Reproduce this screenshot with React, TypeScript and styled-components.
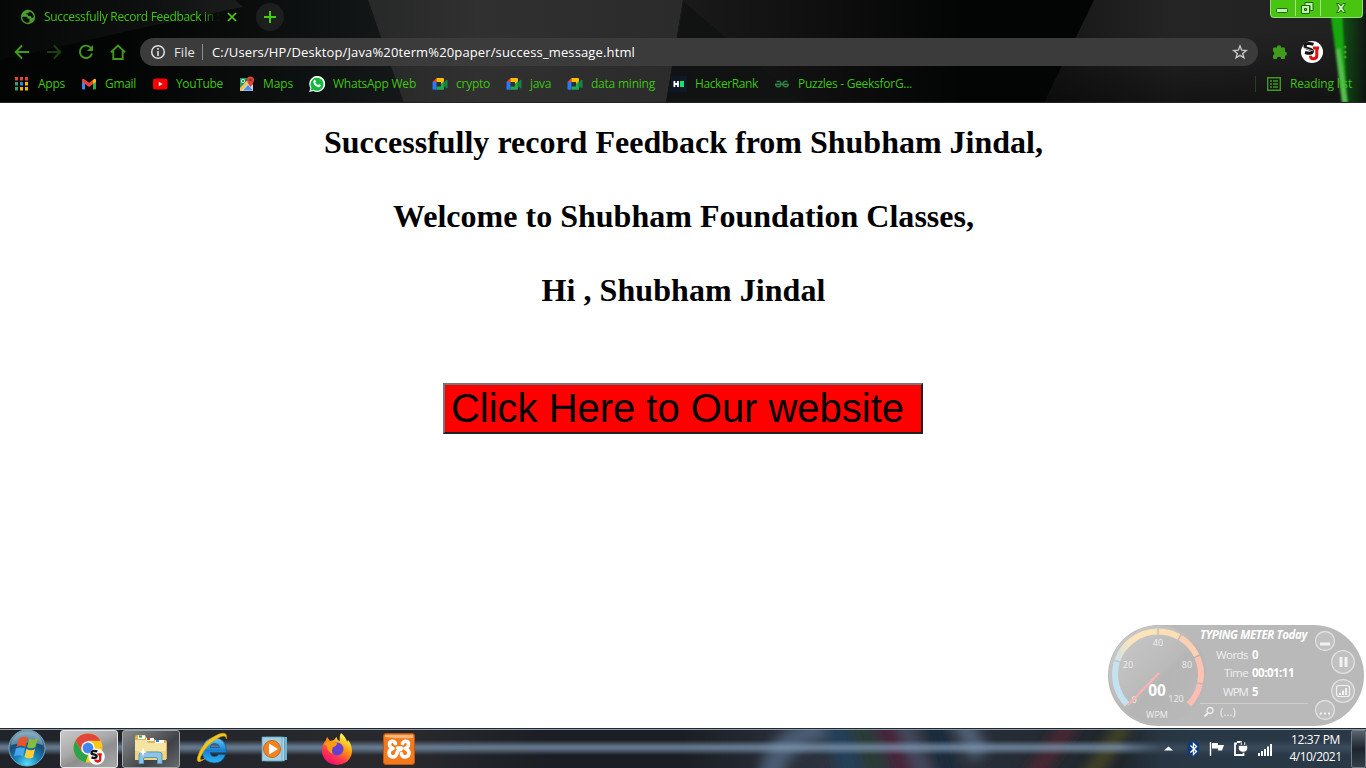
import React, { useLayoutEffect, useRef } from "react";
import styled, { createGlobalStyle } from "styled-components";

const Global = createGlobalStyle`
  * { box-sizing: border-box; }
  html, body { margin: 0; padding: 0; overflow: hidden; background: #fff; }
  svg { display: block; flex: none; }
`;

const ui = `"Open Sans", "Noto Sans", sans-serif`;

/* Text tracked so that it fills exactly the given width */
const Tracked = styled.span<{ $w: number }>`
  display: block;
  flex: none;
  width: ${(p) => p.$w}px;
  white-space: pre;
`;

function Fit({ w, children }: { w: number; children: string }) {
  const inner = useRef<HTMLSpanElement>(null);
  useLayoutEffect(() => {
    const el = inner.current;
    if (!el) return;
    el.style.letterSpacing = "0px";
    const natural = el.getBoundingClientRect().width;
    el.style.letterSpacing = `${(w - natural) / children.length}px`;
  }, [w, children]);
  return (
    <Tracked $w={w}>
      <span ref={inner}>{children}</span>
    </Tracked>
  );
}

const Screen = styled.div`
  position: relative;
  display: flex;
  flex-direction: column;
  width: 1366px;
  height: 768px;
  overflow: hidden;
  background: #fff;
  font-family: ${ui};
`;

/* ---------- browser chrome ---------- */

const Chrome = styled.header`
  position: relative;
  display: flex;
  flex-direction: column;
  height: 103px;
  flex: none;
  background: #050606;
  color: #3ec412;
  font-size: 12px;
  line-height: 16px;
`;
const ThemeArt = styled.svg`
  position: absolute;
  inset: 0;
`;
const TabStrip = styled.div`
  position: relative;
  display: flex;
  align-items: flex-start;
  height: 34px;
  padding-left: 20px;
`;
const Tab = styled.div`
  display: flex;
  align-items: center;
  gap: 4px;
  width: 236px;
  height: 34px;
`;
const TabTitle = styled.div`
  width: 176px;
  margin-left: 4px;
  overflow: hidden;
  mask-image: linear-gradient(90deg, #000 158px, transparent 176px);
`;
const NewTab = styled.div`
  display: grid;
  place-items: center;
  width: 28px;
  height: 28px;
  margin-top: 3px;
  border-radius: 50%;
  background: #1d1f1f;
`;
const WindowControls = styled.div`
  display: flex;
  width: 93px;
  height: 18px;
  margin-left: 986px;
  border: 1px solid #8fdc72;
  border-top: 0;
  border-radius: 0 0 4px 4px;
  background: #48c411;
  overflow: hidden;
`;
const Control = styled.div<{ $w: number }>`
  display: grid;
  place-items: center;
  width: ${(p) => p.$w}px;
  height: 16px;
  padding-right: 2px;
  & + & { border-left: 1px solid #a0e388; }
`;
const Toolbar = styled.div`
  position: relative;
  display: flex;
  align-items: center;
  height: 36px;
  padding-left: 14px;
`;
const NavButtons = styled.div`
  display: flex;
  gap: 16px;
  width: 126px;
`;
const Omnibox = styled.div`
  display: flex;
  align-items: center;
  width: 1118px;
  height: 28px;
  padding: 0 10px;
  border-radius: 14px;
  background: #3b3b3b;
  color: #fff;
  font-size: 13px;
`;
const Scheme = styled.div`
  display: flex;
  margin-left: 8px;
  color: #e4e4e4;
`;
const OmniRule = styled.div`
  width: 1px;
  height: 16px;
  margin: 0 9px 0 7px;
  background: #8b8b8b;
`;
const StarSlot = styled.div`
  margin-left: auto;
`;
const ToolbarActions = styled.div`
  display: flex;
  align-items: center;
  gap: 12px;
  margin-left: 14px;
`;
const Bookmarks = styled.div`
  position: relative;
  display: flex;
  align-items: center;
  gap: 16px;
  height: 28px;
  padding-left: 14px;
`;
const Bookmark = styled.div`
  display: flex;
  align-items: center;
  gap: 8px;
`;
const ReadingList = styled.div`
  display: flex;
  align-items: center;
  gap: 8px;
  height: 16px;
  margin-left: 327px;
  padding-left: 10px;
  border-left: 1px solid #254016;
`;

/* ---------- page ---------- */

const Page = styled.main`
  display: flex;
  flex-direction: column;
  align-items: center;
  height: 625px;
  flex: none;
  padding-top: 21px;
  background: #fff;
`;
const Heading = styled.h1`
  display: flex;
  justify-content: center;
  margin: 0 0 37px;
  padding-left: 1px;
  color: #000;
  font: bold 32px/37px "Liberation Serif", serif;
`;
const LinkButton = styled.button`
  display: flex;
  align-items: center;
  width: 480px;
  height: 51px;
  margin-top: 37px;
  padding: 0 0 1px 6px;
  border: 2px solid;
  border-color: #767676 #222 #222 #767676;
  background: #f00;
  color: #000;
  font: 40px/46px "Liberation Sans", sans-serif;
  text-align: left;
`;

/* ---------- typing meter ---------- */

const Meter = styled.aside`
  position: absolute;
  left: 1108px;
  top: 625px;
  display: flex;
  width: 256px;
  height: 101px;
  border-radius: 51px;
  background: #b9b9b9;
  color: #f0f0f0;
  font-size: 11px;
  line-height: 14px;
  overflow: hidden;
`;
const MeterBody = styled.div`
  display: flex;
  flex-direction: column;
  width: 105px;
  margin-left: -9px;
  padding-top: 3px;
`;
const MeterTitle = styled.div`
  margin-bottom: 1px;
  color: #fff;
  font-size: 11.5px;
  font-style: italic;
  font-weight: 700;
`;
const Stat = styled.div`
  display: flex;
  justify-content: flex-end;
  gap: 4px;
  width: 95px;
  height: 14px;
  margin-top: 4.5px;
  font-size: 11.5px;
  b { width: 43px; color: #fff; }
`;
const MeterFoot = styled.div`
  display: flex;
  gap: 5px;
  align-items: center;
  height: 17px;
  width: 108px;
  margin-top: 4px;
  padding-left: 3px;
  border-top: 1px solid #cdcdcd;
`;
const MeterButtons = styled.svg`
  margin-left: 2px;
`;

/* ---------- taskbar ---------- */

const Taskbar = styled.footer`
  position: relative;
  display: flex;
  align-items: center;
  height: 40px;
  flex: none;
  padding-left: 7px;
  background: #20242b;
  color: #fff;
`;
const TaskArt = styled.svg`
  position: absolute;
  inset: 0;
`;
const Tasks = styled.div`
  position: relative;
  display: flex;
  gap: 4px;
  margin-left: 13px;
`;
const Task = styled.div<{ $state?: "active" | "open" }>`
  display: grid;
  place-items: center;
  width: 58px;
  height: 38px;
  margin-top: 1px;
  border-radius: 3px;
  border: 1px solid ${(p) => (p.$state === "active" ? "#e3e4e5" : p.$state === "open" ? "#a4a8ab" : "transparent")};
  background: ${(p) =>
    p.$state === "active"
      ? "linear-gradient(155deg, #c9c9c9 0%, #aaa 42%, #8e8e8e 60%, #a9a9a9 100%)"
      : p.$state === "open"
      ? "linear-gradient(140deg, #8a8c8e 0%, #55585b 45%, #3e4246 62%, #666a6d 100%)"
      : "transparent"};
`;
const Start = styled.div`
  position: relative;
`;
const Tray = styled.div`
  position: relative;
  display: flex;
  align-items: center;
  margin-left: auto;
`;
const Clock = styled.div`
  display: flex;
  flex-direction: column;
  align-items: center;
  width: 72px;
  margin: 0 0 0 5px;
  padding-left: 1px;
  font-size: 12px;
  line-height: 17px;
`;
const ShowDesktop = styled.div`
  width: 15px;
  height: 38px;
  margin-top: 1px;
  border: 1px solid #717b86;
  border-radius: 2px;
  background: linear-gradient(#59646f, #1d242d 50%, #333e49);
`;

const G = "#3f9a1d";

function ThemeBackdrop() {
  return (
    <ThemeArt width="1366" height="103" viewBox="0 0 1366 103">
      <defs>
        <linearGradient id="mid"><stop stopColor="#272828" /><stop offset=".35" stopColor="#303030" /><stop offset="1" stopColor="#2b2b2b" /></linearGradient>
        <linearGradient id="fade"><stop stopColor="#1b1b1b" /><stop offset=".4" stopColor="#121212" /><stop offset="1" stopColor="#030404" /></linearGradient>
        <linearGradient id="left"><stop stopColor="#060808" /><stop offset=".6" stopColor="#0e1010" /><stop offset="1" stopColor="#1c1e1e" /></linearGradient>
        <linearGradient id="gap"><stop stopColor="#030404" /><stop offset=".65" stopColor="#0e1111" /><stop offset="1" stopColor="#151818" /></linearGradient>
        <linearGradient id="right"><stop stopColor="#151515" /><stop offset=".4" stopColor="#252525" /><stop offset="1" stopColor="#202020" /></linearGradient>
        <linearGradient id="glow"><stop stopColor="#128c12" /><stop offset=".5" stopColor="#0b4a10" /><stop offset="1" stopColor="#0d120d" /></linearGradient>
        <linearGradient id="shade" x1="0" x2="0" y1="0" y2="1"><stop offset=".3" stopColor="#000" stopOpacity="0" /><stop offset="1" stopColor="#000" stopOpacity=".45" /></linearGradient>
        <filter id="soft"><feGaussianBlur stdDeviation="1.3" /></filter>
      </defs>
      <rect width="1366" height="103" fill="#030404" />
      <path d="M120 0H368L405 103H120Z" fill="url(#gap)" />
      <path d="M0 0H235L243 7 155 25 0 60Z" fill="url(#left)" />
      <path d="M368 0H683L666 103H404Z" fill="url(#mid)" />
      <path d="M683 0H960V103H666Z" fill="url(#fade)" />
      <path d="M684 2L803 103H666Z" fill="#111212" />
      <path d="M1094 0H1366V103H1044Z" fill="url(#right)" />
      <path d="M1094 0H1366V103H1044Z" fill="url(#shade)" />
      <path d="M1332 14H1366V103H1346Z" fill="url(#glow)" opacity=".75" />
      <g filter="url(#soft)">
        <path d="M1330 10L1342 10 1347 103 1342 103Z" fill="#12a811" />
        <path d="M1336 50L1340 48 1348 103 1342 103Z" fill="#57bd51" />
      </g>
      <rect y="102" width="1366" height="1" fill="#242424" />
    </ThemeArt>
  );
}

const Globe = () => (
  <svg width="16" height="16" viewBox="0 0 16 16">
    <circle cx="8" cy="8" r="7.2" fill="#49a02b" />
    <path d="M2.300 7.800h4q1.700.3 1.500 2H9.500v3.500Q7.500 14.200 5.500 13.200 2 11.500 2.300 7.800ZM9.500 2.500Q13.500 4 13.800 8q-1 1.500-2.300.7L10.500 7H8V5.400H6.500V4Q9.500 4 9.500 2.500Z" fill="#0a0d0a" />
  </svg>
);
const Apps = () => (
  <svg width="16" height="16" viewBox="0 0 16 16">
    {["#e94335", "#e94335", "#e94335", "#34a064", "#2b83ea", "#f5b400", "#34a064", "#f5b400", "#f5b400"].map((c, i) => (
      <rect key={i} x={1 + (i % 3) * 5} y={1 + Math.floor(i / 3) * 5} width="3" height="3.500" fill={c} />
    ))}
  </svg>
);
const Gmail = () => (
  <svg width="16" height="16" viewBox="0 0 16 16">
    <path d="M1 4v8.500q0 1 1 1h2V6Z" fill="#4285f4" />
    <path d="M15 4v8.500q0 1-1 1h-2V6Z" fill="#34a853" />
    <path d="M12 4l1-1q2-.6 2 1.300v1.500L12 8Z" fill="#fbbc04" />
    <path d="M1 5.800V4.300Q1 2.400 3 3L8 6.800 12 3.800V8L8 11 4 8Z" fill="#ea4335" />
  </svg>
);
const YouTube = () => (
  <svg width="16" height="16" viewBox="0 0 16 16">
    <rect x="1" y="2.500" width="14.500" height="11" rx="2.500" fill="#f00" />
    <path d="M6.800 5.800L10.500 8 6.800 10.200Z" fill="#fff" />
  </svg>
);
const Maps = () => (
  <svg width="16" height="16" viewBox="0 0 16 16">
    <path d="M1 2h8L1 12Z" fill="#23995c" />
    <path d="M1 12L9 3l5 6v6H1Z" fill="#d8d8d8" />
    <path d="M4 14.500L9 9l5 5.500Z" fill="#4d8df6" />
    <path d="M1 12.500L10 3.500l1 2L2 15H1Z" fill="#f8c52f" />
    <circle cx="4" cy="5" r="1.700" fill="none" stroke="#c8e8d5" />
    <path d="M11.500 11Q8 6.500 8 4a3.500 3.500 0 017 0q0 2.500-3.500 7Z" fill="#db4437" />
    <circle cx="11.500" cy="4" r="1.200" fill="#7b231c" />
  </svg>
);
const WhatsApp = () => (
  <svg width="16" height="16" viewBox="0 0 16 16">
    <path d="M.2 16L1.300 12A8 8 0 114.200 14.900Z" fill="#f2fff2" />
    <path d="M1.700 14.500l.8-2.800a6.500 6.500 0 112 2Z" fill="#15b83e" />
    <path d="M5.300 4c.6-.4 1-.2 1.200.4l.5 1.200-.7 1c.6 1.200 1.500 2 2.800 2.600l1-1 1.800.9c.1 2-2 2.400-3.500 1.800C6.200 10 4.500 8 4.400 6.200Q4.300 4.800 5.300 4Z" fill="#fff" />
  </svg>
);
const Meet = () => (
  <svg width="16" height="16" viewBox="0 0 16 16">
    <path d="M.5 6L4.500 2v4Z" fill="#ea4335" />
    <path d="M4.500 2H11q1 0 1 1v4L9 8V6H4.500Z" fill="#fbbc04" />
    <path d="M.5 6h4v7.800H1.500q-1 0-1-1Z" fill="#2879f2" />
    <path d="M4.500 10.500H9V8l3-3v7.800q0 1-1 1H4.500Z" fill="#20a853" />
    <path d="M11 7.800L14.200 4q1.300-.7 1.300.5v7q0 1.200-1.300.5L11 9Z" fill="#168542" />
  </svg>
);
const Hacker = () => (
  <svg width="16" height="16" viewBox="0 0 16 16">
    <rect width="16" height="16" fill="#101827" />
    <path d="M3.400 5v6M7 5v6M3.400 8H7" stroke="#fff" strokeWidth="1.800" />
    <rect x="9" y="5" width="4" height="6" fill="#12e56c" />
  </svg>
);
const Geeks = () => (
  <svg width="16" height="16" viewBox="0 0 16 16" fill="none" stroke="#2c8044" strokeWidth="1.400">
    <path d="M2.500 5.700Q7 4.200 7 8q0 2.700-2.700 2.700T1.600 8.300H14.500M13.500 5.700Q9 4.200 9 8q0 2.700 2.700 2.700t2.700-2.400" />
  </svg>
);

const bookmarks: [() => React.JSX.Element, string, number][] = [
  [Apps, "Apps", 27],
  [Gmail, "Gmail", 31],
  [YouTube, "YouTube", 47],
  [Maps, "Maps", 30],
  [WhatsApp, "WhatsApp Web", 83],
  [Meet, "crypto", 34],
  [Meet, "java", 21],
  [Meet, "data mining", 64],
  [Hacker, "HackerRank", 63],
  [Geeks, "Puzzles - GeeksforG...", 114],
];

const Avatar = () => (
  <svg width="24" height="22" viewBox="-1 0 24 22">
    <circle cx="11" cy="11" r="11" fill="#fff" />
    <path d="M12.500 3.200Q4 1 4 5.500C4 8.500 11.500 7 11.500 10.500Q11 13.500 4 11.500" fill="none" stroke="#111" strokeWidth="3" />
    <path d="M12 7h6M15.800 7v7.500q0 3.300-3.300 3.300-3 0-3-3" fill="none" stroke="#e01212" strokeWidth="3" />
    <path d="M3 7l9 3" stroke="#fff" strokeWidth=".7" />
  </svg>
);

function BrowserChrome() {
  return (
    <Chrome>
      <ThemeBackdrop />
      <TabStrip>
        <Tab>
          <Globe />
          <TabTitle><Fit w={179}>Successfully Record Feedback in S</Fit></TabTitle>
          <svg width="16" height="16" viewBox="0 0 16 16"><path d="M4 4l8 8M12 4l-8 8" stroke="#4dcc22" strokeWidth="1.700" /></svg>
        </Tab>
        <NewTab>
          <svg width="14" height="14" viewBox="0 0 14 14"><path d="M7 1v12M1 7h12" stroke="#3fd010" strokeWidth="2" /></svg>
        </NewTab>
        <WindowControls>
          <Control $w={24}>
            <svg width="14" height="14" viewBox="0 0 14 14"><rect x="1.500" y="7.500" width="11" height="4" rx="1" fill="#c3efb4" stroke="#1b6a08" /></svg>
          </Control>
          <Control $w={25}>
            <svg width="14" height="14" viewBox="0 0 14 14"><path d="M5 1.500h8v8H10V4.500H5Z" fill="#c3efb4" stroke="#1b6a08" /><path fillRule="evenodd" d="M1.500 4.500h8v8h-8ZM4.500 7.500v2h2v-2Z" fill="#c3efb4" stroke="#1b6a08" /></svg>
          </Control>
          <Control $w={42}>
            <svg width="14" height="14" viewBox="0 0 14 14"><path d="M2.500 2.500H5L7 5l2-2.500h2.500L8.700 7l2.800 4.500H9L7 9l-2 2.500H2.500L5.300 7Z" fill="#d2f4c7" stroke="#1b6a08" /></svg>
          </Control>
        </WindowControls>
      </TabStrip>
      <Toolbar>
        <NavButtons>
          <svg width="16" height="16" viewBox="0 0 16 16"><path d="M15 8H2M8 1.500L1.700 8 8 14.500" fill="none" stroke={G} strokeWidth="1.900" /></svg>
          <svg width="16" height="16" viewBox="0 0 16 16"><path d="M1 8h13M8 1.500L14.300 8 8 14.500" fill="none" stroke="#1c400f" strokeWidth="1.900" /></svg>
          <svg width="16" height="16" viewBox="0 0 16 16"><path d="M13.300 4.500A6.200 6.200 0 1014 9.500" fill="none" stroke={G} strokeWidth="1.900" /><path d="M15 1v6H9Z" fill={G} /></svg>
          <svg width="16" height="16" viewBox="0 0 16 16"><path d="M1 8.300L8 1.500 15 8.300M3.300 7v8h9.400V7" fill="none" stroke={G} strokeWidth="1.900" /></svg>
        </NavButtons>
        <Omnibox>
          <svg width="16" height="16" viewBox="0 0 16 16"><circle cx="8" cy="8" r="6.300" fill="none" stroke="#e0e0e0" strokeWidth="1.500" /><path d="M8 7v5M8 4v1.700" stroke="#e0e0e0" strokeWidth="1.600" /></svg>
          <Scheme><Fit w={21}>File</Fit></Scheme>
          <OmniRule />
          <Fit w={423}>C:/Users/HP/Desktop/Java%20term%20paper/success_message.html</Fit>
          <StarSlot>
            <svg width="16" height="16" viewBox="0 0 16 16"><path d="M8 2l1.700 4.200 4.500.3-3.500 2.900 1.200 4.400L8 11.300l-3.900 2.500 1.200-4.400-3.500-2.900 4.500-.3Z" fill="none" stroke="#c8c8c8" strokeWidth="1.400" /></svg>
          </StarSlot>
        </Omnibox>
        <ToolbarActions>
          <svg width="16" height="16" viewBox="0 0 16 16"><path d="M1 4.500q0-1 1-1h2.800a2.200 2.200 0 014.400 0H12q1 0 1 1v3.200a2 2 0 010 4V14q0 1-1 1H9.200a2.200 2.200 0 00-4.400 0H2q-1 0-1-1v-2.500a2.200 2.200 0 000-4Z" fill={G} /></svg>
          <Avatar />
          <svg width="20" height="16" viewBox="0 0 20 16"><g fill={G}><circle cx="9" cy="3" r="1.600" /><circle cx="9" cy="8" r="1.600" /><circle cx="9" cy="13" r="1.600" /></g></svg>
        </ToolbarActions>
      </Toolbar>
      <Bookmarks>
        {bookmarks.map(([Icon, label, w]) => (
          <Bookmark key={label}><Icon /><Fit w={w}>{label}</Fit></Bookmark>
        ))}
        <ReadingList>
          <svg width="16" height="16" viewBox="0 0 16 16"><path d="M1.700 1.700h12.600v12.600H1.700Z" fill="none" stroke={G} strokeWidth="1.400" /><path d="M4 5h2M7 5h5M4 8h2M7 8h5M4 11h2M7 11h5" stroke={G} strokeWidth="1.500" /></svg>
          <Fit w={62}>Reading list</Fit>
        </ReadingList>
      </Bookmarks>
    </Chrome>
  );
}

const polar = (deg: number, r: number) => {
  const a = (deg * Math.PI) / 180;
  return `${(50 + r * Math.cos(a)).toFixed(2)} ${(49.5 + r * Math.sin(a)).toFixed(2)}`;
};
const arcs: [number, number, string][] = [
  [136, 197, "#c5e2f0"],
  [199, 269, "url(#blend)"],
  [271, 299, "#fce0b4"],
  [301, 334, "#fdd0b2"],
  [336, 371, "#ffc2b0"],
  [373, 404, "#ffbdb4"],
];

function TypingMeter() {
  return (
    <Meter>
      <svg width="101" height="101" viewBox="0 0 101 101" fontFamily="Open Sans" fontSize="9" fill="#eee" textAnchor="middle">
        <defs>
          <linearGradient id="face" x1="0" y1="0" x2="1" y2="1"><stop offset=".1" stopColor="#c8c8c8" /><stop offset=".5" stopColor="#bababa" /><stop offset=".55" stopColor="#b5b5b5" /><stop offset="1" stopColor="#b9b9b9" /></linearGradient>
          <linearGradient id="blend" x1="0" x2="1" y1="1" y2="0"><stop stopColor="#cde4e8" /><stop offset=".45" stopColor="#fae4bd" /><stop offset="1" stopColor="#fde2b5" /></linearGradient>
        </defs>
        <circle cx="50" cy="49.500" r="49" fill="url(#face)" />
        {arcs.map(([a, b, c]) => (
          <path key={a} d={`M${polar(a, 43)}A43 43 0 0 1 ${polar(b, 43)}`} fill="none" stroke={c} strokeWidth="6" />
        ))}
        <text x="50" y="21">40</text>
        <text x="20" y="43">20</text>
        <text x="79" y="43">80</text>
        <text x="68" y="77">120</text>
        <text x="26" y="78">0</text>
        <text x="49" y="92.500">WPM</text>
        <path d="M51 48L20 80" stroke="#ffb3b1" strokeWidth="2" />
        <text x="49" y="71" fill="#fff" fontSize="15.500" fontWeight="700">00</text>
      </svg>
      <MeterBody>
        <MeterTitle><Fit w={107}>TYPING METER Today</Fit></MeterTitle>
        <Stat><Fit w={32}>Words</Fit><b>0</b></Stat>
        <Stat><Fit w={24}>Time</Fit><b><Fit w={42}>00:01:11</Fit></b></Stat>
        <Stat><Fit w={25}>WPM</Fit><b>5</b></Stat>
        <MeterFoot>
          <svg width="12" height="12" viewBox="0 0 12 12"><circle cx="7" cy="4.500" r="3" fill="none" stroke="#eee" strokeWidth="1.300" /><path d="M5 7L1.500 10.500" stroke="#eee" strokeWidth="2" /></svg>
          <Fit w={16}>(...)</Fit>
        </MeterFoot>
      </MeterBody>
      <MeterButtons width="54" height="101" viewBox="199 0 54 101">
        <g fill="#c1c1c1" stroke="#e1e1e1" strokeWidth="1.300">
          <circle cx="217" cy="16" r="9.500" /><circle cx="235" cy="37" r="11.300" /><circle cx="235" cy="66" r="11.300" /><circle cx="217" cy="85" r="9.500" />
        </g>
        <path d="M212 19h10M233 32v10M238 32v10" stroke="#f2f2f2" strokeWidth="3" />
        <rect x="228.500" y="60.500" width="13" height="11" rx="2.500" fill="none" stroke="#f2f2f2" strokeWidth="1.200" />
        <path d="M232 70v-2M235 70v-4.500M238 70v-7" stroke="#f2f2f2" strokeWidth="2" />
        <path d="M212 88.500h2M216 88.500h2M220 88.500h2" stroke="#f2f2f2" strokeWidth="2" />
      </MeterButtons>
    </Meter>
  );
}

function TaskbarBackdrop() {
  return (
    <TaskArt width="1366" height="40" viewBox="0 0 1366 40">
      <defs>
        <linearGradient id="base"><stop stopColor="#202329" /><stop offset=".3" stopColor="#29292d" /><stop offset=".4" stopColor="#1b1e24" /><stop offset=".5" stopColor="#1b1e24" /><stop offset=".62" stopColor="#303743" /><stop offset=".82" stopColor="#1f252b" /><stop offset=".88" stopColor="#293744" /><stop offset="1" stopColor="#2e3b48" /></linearGradient>
        <linearGradient id="shine" x1="0" x2="0" y1="0" y2="1"><stop offset=".3" stopColor="#7390ac" stopOpacity="0" /><stop offset=".46" stopColor="#7d96b0" stopOpacity=".72" /><stop offset=".52" stopColor="#7d96b0" stopOpacity=".7" /><stop offset=".68" stopColor="#7390ac" stopOpacity="0" /></linearGradient>
        <linearGradient id="dim"><stop offset=".82" stopColor="#22303d" stopOpacity="0" /><stop offset=".85" stopColor="#293846" stopOpacity=".75" /></linearGradient>
        <filter id="haze" x="-10%" width="120%" y="-50%" height="200%"><feGaussianBlur stdDeviation="6" /></filter>
      </defs>
      <rect width="1366" height="40" fill="url(#base)" />
      <g filter="url(#haze)" fill="none" strokeWidth="16">
        <path d="M772 60Q765 10 840 -5" stroke="#4a5b72" strokeWidth="24" />
        <path d="M832 -10L855 55" stroke="#23405a" strokeWidth="22" />
        <path d="M857 -10L880 55" stroke="#2c3d35" />
        <path d="M882 -10L908 55" stroke="#4c2139" />
        <path d="M902 -10L927 55" stroke="#454861" />
        <path d="M932 -10L952 55" stroke="#14293d" />
        <path d="M960 -10L980 28" stroke="#4f5f75" strokeWidth="20" />
        <path d="M1075 -10L1028 55" stroke="#4b2730" />
        <path d="M1130 -10L1085 55" stroke="#434327" />
      </g>
      <rect width="1366" height="40" fill="url(#shine)" />
      <rect width="1366" height="40" fill="url(#dim)" />
      <rect width="1366" height="1" fill="#20272f" />
      <rect y="1" width="1366" height="1" fill="#8f9da9" />
    </TaskArt>
  );
}

const StartOrb = () => (
  <svg width="40" height="40" viewBox="0 0 40 40">
    <defs>
      <radialGradient id="orb" cx=".5" cy=".95" r=".9"><stop stopColor="#57e4ff" /><stop offset=".35" stopColor="#1b86be" /><stop offset=".7" stopColor="#164a76" /><stop offset="1" stopColor="#7198b1" /></radialGradient>
    </defs>
    <circle cx="20" cy="20" r="18" fill="url(#orb)" stroke="#79a7bd" />
    <path d="M4 17Q6 4 20 4t16 13Q22 12 4 17Z" fill="#bcd6df" opacity=".4" />
    <path d="M12 10.500q4.500-3 9-.5L18.500 19q-4.500-2.500-9 0Z" fill="#e8552b" />
    <path d="M22.500 10.500q4 2.500 8.500-.5L28.500 19q-4.500 2.500-8.500 0Z" fill="#86bd3b" />
    <path d="M9 20.500q4.500-2 9 0l-2 8q-4.500-2.500-9 0Z" fill="#49a8ed" />
    <path d="M19.500 21q4.500 2.500 8.500 0l-2 8.500q-4.500 2-8.500-.5Z" fill="#fdce36" />
  </svg>
);
const ChromeLogo = () => (
  <svg width="32" height="32" viewBox="0 0 32 32">
    <circle cx="15" cy="15" r="14.500" fill="#fbc918" />
    <path d="M2.440 7.750A14.500 14.500 0 0127.560 7.750H15L8.700 18.600Z" fill="#e2453a" />
    <path d="M2.440 7.750L8.700 18.600Q12 22 15 22L12.500 29.300A14.500 14.500 0 012.440 7.750Z" fill="#2ba24c" />
    <circle cx="15" cy="15" r="6.800" fill="#fff" /><circle cx="15" cy="15" r="5.400" fill="#4486ef" />
    <g transform="translate(15.500 15.500) scale(.74)">
      <circle cx="11" cy="11" r="11" fill="#fff" />
      <path d="M12 4Q4 2 4 6c0 3 7 1 7 5q-1 3-7 1" fill="none" stroke="#111" strokeWidth="3.200" />
      <path d="M12 8h6M15.800 8v6q0 3.500-3.300 3.500-3 0-3-2.500" fill="none" stroke="#e01212" strokeWidth="3.200" />
    </g>
  </svg>
);
const Folder = () => (
  <svg width="34" height="32" viewBox="0 0 34 32">
    <path d="M1 4q0-2 2-2h8l2 3h6l2 2h10q2 0 2 2v17H1Z" fill="#dcb657" />
    <path d="M4 2.500h7V6H4ZM12 5h8v3h-8ZM21 7h9v3h-9Z" fill="#fff" />
    <path d="M5 2.500h3v2H5Z" fill="#23a53a" /><path d="M13 5h3v2h-3Z" fill="#d3462e" /><path d="M22 7h3v2h-3Z" fill="#2a84d8" />
    <path d="M1 7h11l2 3h18v17H1Z" fill="#f6e4a2" /><path d="M1 18h31v9H1Z" fill="#edd583" />
    <path d="M5 30.500V22q0-3 3-3h17q3 0 3 3v8.500h-4.500V26q0-1.500-1.500-1.500H11q-1.500 0-1.500 1.500v4.500Z" fill="#8fc5e4" stroke="#5b98bd" />
    <path d="M9 14.500l1 3.500 3.500 1-3.500 1-1 3.500-1-3.500L4.500 19 8 18Z" fill="#fff" />
  </svg>
);
const Explorer = () => (
  <svg width="34" height="34" viewBox="0 0 34 34">
    <defs><linearGradient id="ie" x1="0" x2="0" y1="0" y2="1"><stop stopColor="#66cdf9" /><stop offset=".5" stopColor="#177fd4" /><stop offset="1" stopColor="#31b3f2" /></linearGradient></defs>
    <path fillRule="evenodd" d="M30.500 20.500H14q.5 4 4.500 4 3 0 4-2h7Q27 31 18 31 6 30 6 18.500 7 6 18.500 6q12 0 12 14.500ZM14 15.500h9.500q-.5-4-4.700-4T14 15.500Z" fill="url(#ie)" stroke="#10568f" strokeWidth=".7" />
    <path d="M9 26.500Q0 33.500 1.500 25.500 6 9 23 2q9-3 7.500 5Q30 2.500 24 5 10 12 4.500 25q-1.500 5 4.500 1.500Z" fill="#f6c51d" stroke="#d99d0d" strokeWidth=".6" />
  </svg>
);
const Player = () => (
  <svg width="28" height="26" viewBox="0 0 28 26">
    <path d="M8 1h18v23H8Z" fill="#73b3cf" /><path d="M5 1h18.500v24H5Z" fill="#a9d8ea" stroke="#4789a5" strokeWidth=".6" /><path d="M1 1h20v24H1Z" fill="#a2d0e2" stroke="#5e9cb7" strokeWidth=".7" />
    <circle cx="11" cy="13" r="8.500" fill="#f08423" stroke="#cf660e" /><path d="M8 7.500L17 13 8 18.500Z" fill="#fff" />
  </svg>
);
const Firefox = () => (
  <svg width="32" height="32" viewBox="0 0 32 32">
    <defs>
      <linearGradient id="fox" x1=".8" y1="0" x2=".2" y2="1"><stop offset=".1" stopColor="#fff44f" /><stop offset=".4" stopColor="#ff980e" /><stop offset=".7" stopColor="#ff3750" /><stop offset="1" stopColor="#eb0878" /></linearGradient>
    </defs>
    <path d="M20 0q5 4 6 9l1-2q4 5 4 11a15 14 0 01-30 0Q1 11 5 7l1-3 3 4 4-1q2-3 3-3-.5 3 3 4-1-5 1-8Z" fill="url(#fox)" />
    <circle cx="16" cy="16" r="6.500" fill="#6540d2" />
    <path d="M3 11q5-4 9-1h4q0 3-4 4-2 4 0 7-6-2-6-8Z" fill="#ff9b13" />
  </svg>
);
const Xampp = () => (
  <svg width="32" height="32" viewBox="0 0 32 32">
    <rect x=".5" y=".5" width="31" height="31" rx="2.500" fill="#f27a1d" stroke="#bd5512" />
    <path d="M2 2h28v3Q16 6 2 4Z" fill="#fbb77e" />
    <path d="M12.500 10.500Q11.500 8 9 8.200 6.300 8.500 6.500 11.500T10 15.500Q6 16.500 6 20.200 6.300 24 10 24q3 0 3.700-3.300l1-2.400q1-1.800 3.300-1.800M14.500 15h3.800M19.500 10.500Q20.500 8 23 8.200q2.700.3 2.500 3.300T22 15.500q4 1 4 4.700-.3 3.800-4 3.800-3 0-3.700-3.300" fill="none" stroke="#fff" strokeWidth="3.600" strokeLinejoin="round" strokeLinecap="round" />
  </svg>
);

function WindowsTaskbar() {
  return (
    <Taskbar>
      <TaskbarBackdrop />
      <Start><StartOrb /></Start>
      <Tasks>
        <Task $state="active"><ChromeLogo /></Task>
        <Task $state="open"><Folder /></Task>
        <Task><Explorer /></Task>
        <Task><Player /></Task>
        <Task><Firefox /></Task>
        <Task><Xampp /></Task>
      </Tasks>
      <Tray>
        <svg width="114" height="24" viewBox="1160 9 114 24">
          <path d="M1164 23.500l4.500-4 4.500 4Z" fill="#fff" />
          <rect x="1187.500" y="14" width="11.500" height="15.500" rx="5" fill="#0c3c7d" />
          <path d="M1190.500 18.500l6 6-3 3v-11l3 3-6 6" fill="none" stroke="#fff" strokeWidth="1.300" />
          <path d="M1210.500 15v14" stroke="#fff" strokeWidth="1.400" />
          <path d="M1212 16h6v2h6l-2 5.500h-4v-2h-6Z" fill="#fff" />
          <path d="M1237 16.500h-2v11.500h8.500v-2.500M1237 15h5" fill="none" stroke="#fff" strokeWidth="1.800" />
          <path d="M1238.500 18.500h9v3.500q-1 3-3.500 3h-2q-3-.5-3.500-3ZM1240.500 15h1.500v3.500h-1.500ZM1244 15h1.500v3.500h-1.500Z" fill="#fff" stroke="#26323d" strokeWidth=".5" />
          <path d="M1259 29v-3M1262 29v-5M1265 29v-7M1268 29v-9.500M1271 29v-12" stroke="#fff" strokeWidth="2" />
        </svg>
        <Clock><Fit w={49}>12:37 PM</Fit><Fit w={52}>4/10/2021</Fit></Clock>
        <ShowDesktop />
      </Tray>
    </Taskbar>
  );
}

export default function App() {
  return (
    <Screen>
      <Global />
      <BrowserChrome />
      <Page>
        <Heading><Fit w={719}>Successfully record Feedback from Shubham Jindal,</Fit></Heading>
        <Heading><Fit w={581}>Welcome to Shubham Foundation Classes,</Fit></Heading>
        <Heading><Fit w={284}>Hi , Shubham Jindal</Fit></Heading>
        <LinkButton><Fit w={453}>Click Here to Our website</Fit></LinkButton>
      </Page>
      <TypingMeter />
      <WindowsTaskbar />
    </Screen>
  );
}
